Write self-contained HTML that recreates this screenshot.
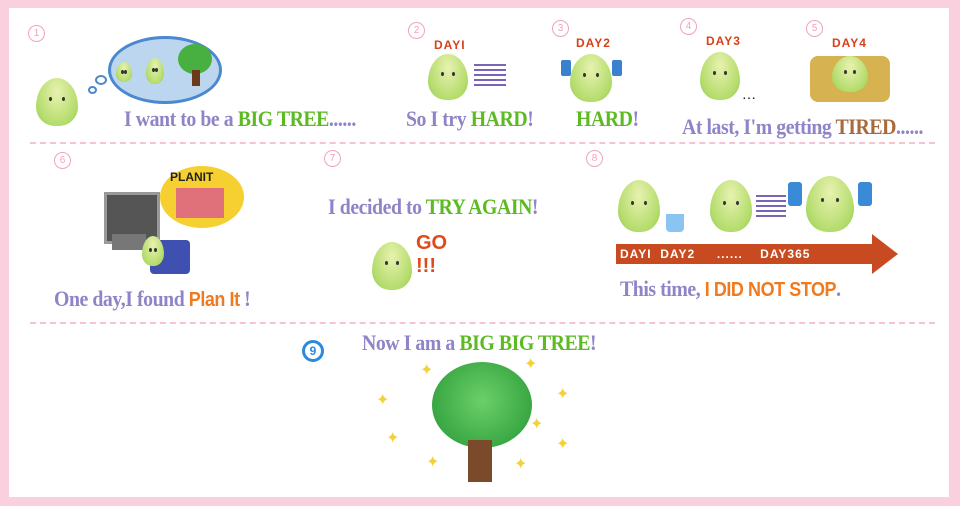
<!DOCTYPE html>
<html><head><meta charset="utf-8"><style>
*{margin:0;padding:0}
body{width:960px;height:506px;background:#fad0df;position:relative;overflow:hidden;font-family:"Liberation Serif",serif}
#p{position:absolute;left:9px;top:8px;width:940px;height:489px;background:#fff}
.a{position:absolute}
.t{position:absolute;font-size:22px;color:#8e85c8;white-space:nowrap;letter-spacing:-0.5px;transform:scaleX(.9);transform-origin:left;font-weight:bold}
.g{color:#5cba22;font-weight:bold}
.o{color:#f07a20;font-weight:bold;font-family:"Liberation Sans",sans-serif}
.dash{position:absolute;left:30px;width:905px;border-top:2px dashed #f7c2d4}
.n{position:absolute;width:15px;height:15px;border:1.5px solid #f3a2b8;border-radius:50%;color:#f3a2b8;font:10px "Liberation Sans",sans-serif;text-align:center;line-height:15px}
.b{position:absolute;border-radius:50% 50% 45% 45%/60% 60% 40% 40%;background:radial-gradient(ellipse at 50% 30%,#e8f2b0,#b4dc6c 70%,#8cc850);}
.b:before,.b:after{content:"";position:absolute;width:3px;height:4px;background:#333;border-radius:50%;top:40%}
.b:before{left:32%}.b:after{right:32%}
.day{position:absolute;color:#d8401a;font:bold 12px "Liberation Sans",sans-serif;letter-spacing:1px}
.lines{position:absolute;background:repeating-linear-gradient(#7a64b8 0 2px,transparent 2px 5px)}
.star{position:absolute;color:#f2d23a;font-size:16px}
</style></head><body>
<div id="p"></div>
<div class="dash" style="top:142px"></div>
<div class="dash" style="top:322px"></div>

<div class="n" style="left:28px;top:25px">1</div>
<div class="a" style="left:108px;top:36px;width:108px;height:62px;border:3px solid #4a88d0;border-radius:50%;background:#bcd6f0"></div>
<div class="a" style="left:95px;top:75px;width:8px;height:6px;border:2px solid #4a88d0;border-radius:50%"></div>
<div class="a" style="left:88px;top:86px;width:5px;height:4px;border:2px solid #4a88d0;border-radius:50%"></div>
<div class="b" style="left:116px;top:62px;width:16px;height:20px"></div>
<div class="b" style="left:146px;top:58px;width:18px;height:26px"></div>
<div class="a" style="left:178px;top:44px;width:34px;height:30px;border-radius:50%;background:#48b040"></div>
<div class="a" style="left:192px;top:70px;width:8px;height:16px;background:#6a3a1a"></div>
<div class="b" style="left:36px;top:78px;width:42px;height:48px"></div>
<div class="t" style="left:124px;top:106px">I want to be a <span class="g">BIG TREE</span>......</div>

<div class="n" style="left:408px;top:22px">2</div>
<div class="day" style="left:434px;top:38px">DAYI</div>
<div class="b" style="left:428px;top:54px;width:40px;height:46px"></div>
<div class="lines" style="left:474px;top:64px;width:32px;height:24px"></div>
<div class="t" style="left:406px;top:106px">So I try <span class="g">HARD</span>!</div>

<div class="n" style="left:552px;top:20px">3</div>
<div class="day" style="left:576px;top:36px">DAY2</div>
<div class="a" style="left:561px;top:60px;width:10px;height:16px;background:#3a80d0;border-radius:2px"></div>
<div class="a" style="left:612px;top:60px;width:10px;height:16px;background:#3a80d0;border-radius:2px"></div>
<div class="b" style="left:570px;top:54px;width:42px;height:48px"></div>
<div class="t" style="left:576px;top:106px" ><span class="g">HARD</span>!</div>

<div class="n" style="left:680px;top:18px">4</div>
<div class="day" style="left:706px;top:34px">DAY3</div>
<div class="b" style="left:700px;top:52px;width:40px;height:48px"></div>
<div class="a" style="left:742px;top:88px;font-size:14px">…</div>
<div class="t" style="left:682px;top:114px">At last, I'm getting <span style="color:#a86a3a;font-weight:bold">TIRED</span>......</div>

<div class="n" style="left:806px;top:20px">5</div>
<div class="day" style="left:832px;top:36px">DAY4</div>
<div class="a" style="left:810px;top:56px;width:80px;height:46px;background:#d6b250;border-radius:8px"></div>
<div class="b" style="left:832px;top:56px;width:36px;height:36px"></div>

<div class="n" style="left:54px;top:152px">6</div>
<div class="a" style="left:104px;top:192px;width:50px;height:46px;background:#555;border:3px solid #999"></div>
<div class="a" style="left:112px;top:234px;width:34px;height:16px;background:#777"></div>
<div class="a" style="left:160px;top:166px;width:84px;height:62px;background:#f6d030;border-radius:50%"></div>
<div class="a" style="left:170px;top:170px;font:bold 12px 'Liberation Sans',sans-serif;color:#222">PLANIT</div>
<div class="a" style="left:176px;top:188px;width:48px;height:30px;background:#e0707a"></div>
<div class="a" style="left:150px;top:240px;width:40px;height:34px;background:#4050b0;border-radius:4px"></div>
<div class="b" style="left:142px;top:236px;width:22px;height:30px"></div>
<div class="t" style="left:54px;top:286px">One day,I found <span class="o" style="font-size:20px">Plan It</span> !</div>

<div class="n" style="left:324px;top:150px">7</div>
<div class="t" style="left:328px;top:194px">I decided to <span class="g">TRY AGAIN</span>!</div>
<div class="b" style="left:372px;top:242px;width:40px;height:48px"></div>
<div class="a" style="left:416px;top:232px;font:bold 20px 'Liberation Sans',sans-serif;color:#e04a1a">GO<br>!!!</div>

<div class="n" style="left:586px;top:150px">8</div>
<div class="b" style="left:618px;top:180px;width:42px;height:52px"></div>
<div class="a" style="left:666px;top:214px;width:18px;height:18px;background:#8ac4f0;border-radius:0 0 4px 4px"></div>
<div class="b" style="left:710px;top:180px;width:42px;height:52px"></div>
<div class="lines" style="left:756px;top:195px;width:30px;height:22px"></div>
<div class="a" style="left:788px;top:182px;width:14px;height:24px;background:#3a8ad8;border-radius:3px"></div>
<div class="a" style="left:858px;top:182px;width:14px;height:24px;background:#3a8ad8;border-radius:3px"></div>
<div class="b" style="left:806px;top:176px;width:48px;height:56px"></div>
<div class="a" style="left:616px;top:244px;width:258px;height:20px;background:#c84a20"></div>
<div class="a" style="left:872px;top:234px;width:0;height:0;border-left:26px solid #c84a20;border-top:20px solid transparent;border-bottom:20px solid transparent"></div>
<div class="a" style="left:620px;top:247px;font:bold 12px 'Liberation Sans',sans-serif;color:#fff;letter-spacing:1px;white-space:nowrap">DAYI &nbsp;DAY2 &nbsp;&nbsp;&nbsp;&nbsp;...... &nbsp;&nbsp;&nbsp;DAY365</div>
<div class="t" style="left:620px;top:276px">This time, <span class="o" style="font-size:20px">I DID NOT STOP</span>.</div>

<div class="a" style="left:302px;top:340px;width:16px;height:16px;border:3px solid #2a8ae0;border-radius:50%;color:#2a8ae0;font:bold 12px 'Liberation Sans',sans-serif;text-align:center;line-height:16px">9</div>
<div class="t" style="left:362px;top:330px">Now I am a <span class="g">BIG BIG TREE</span>!</div>
<div class="a" style="left:432px;top:362px;width:100px;height:86px;border-radius:50%;background:radial-gradient(circle at 50% 45%,#6cd068,#3aa844 70%,#2a9038)"></div>
<div class="a" style="left:468px;top:440px;width:24px;height:42px;background:#7a4a2a"></div>
<div class="star" style="left:420px;top:360px">✦</div>
<div class="star" style="left:524px;top:354px">✦</div>
<div class="star" style="left:376px;top:390px">✦</div>
<div class="star" style="left:556px;top:384px">✦</div>
<div class="star" style="left:386px;top:428px">✦</div>
<div class="star" style="left:556px;top:434px">✦</div>
<div class="star" style="left:426px;top:452px">✦</div>
<div class="star" style="left:514px;top:454px">✦</div>
<div class="star" style="left:530px;top:414px">✦</div>
</body></html>
